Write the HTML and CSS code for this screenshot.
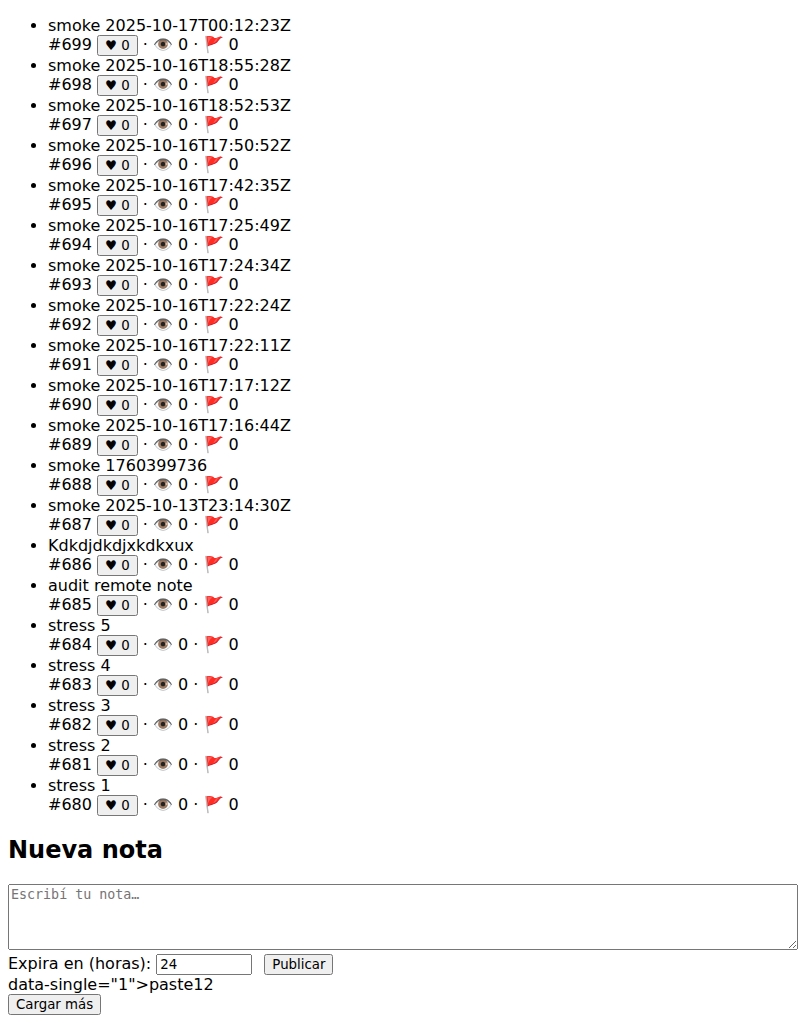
FILE: index.html
```html
<!DOCTYPE html>
<html lang="es">
<head>
<meta charset="utf-8">
<title>Notas</title>
<link rel="stylesheet" href="styles.css">
</head>
<body>
<ul class="notes" id="notes"></ul>
<h2 class="heading">Nueva nota</h2>
<form class="form">
<textarea class="text" placeholder="Escribí tu nota…"></textarea>
<div class="row"><label>Expira en (horas): <input class="hours" type="number" value="24"></label><button class="publish" type="button">Publicar</button></div>
</form>
<div class="stray">data-single="1"&gt;paste12</div>
<button class="more" type="button">Cargar más</button>
<script src="notes.js"></script>
</body>
</html>
```
FILE: styles.css
```css
body { margin: 0; padding: 16px 2px 8px 8px; font-family: "DejaVu Sans", sans-serif; font-size: 16px; background: #fff; color: #000; }
.notes { margin: 0 0 16px; padding-left: 40px; }
.note { height: 40px; }
.meta { height: 21px; white-space: nowrap; }
.heading { margin: 20px 0; font-size: 24px; }
button, .hours { font-family: "DejaVu Sans", sans-serif; font-size: 13.3333px; }
.text { display: block; box-sizing: border-box; width: 100%; height: 66px; font-family: "DejaVu Sans Mono", monospace; font-size: 13.3333px; }
.row { margin-top: 4px; height: 21px; white-space: nowrap; }
.hours { box-sizing: border-box; width: 96px; }
.publish { margin-left: 12px; }
.stray { height: 19px; }
.more { display: block; }
```
FILE: notes.js
```js
const notes = [
  "smoke 2025-10-17T00:12:23Z", "smoke 2025-10-16T18:55:28Z", "smoke 2025-10-16T18:52:53Z",
  "smoke 2025-10-16T17:50:52Z", "smoke 2025-10-16T17:42:35Z", "smoke 2025-10-16T17:25:49Z",
  "smoke 2025-10-16T17:24:34Z", "smoke 2025-10-16T17:22:24Z", "smoke 2025-10-16T17:22:11Z",
  "smoke 2025-10-16T17:17:12Z", "smoke 2025-10-16T17:16:44Z", "smoke 1760399736",
  "smoke 2025-10-13T23:14:30Z", "Kdkdjdkdjxkdkxux", "audit remote note",
  "stress 5", "stress 4", "stress 3", "stress 2", "stress 1"
];
document.getElementById("notes").innerHTML = notes.map((text, i) =>
  `<li class="note"><div>${text}</div><div class="meta">#${699 - i} <button type="button">♥ 0</button> <span>· 👁️ 0</span> <span>· 🚩 0</span></div></li>`
).join("");
```
